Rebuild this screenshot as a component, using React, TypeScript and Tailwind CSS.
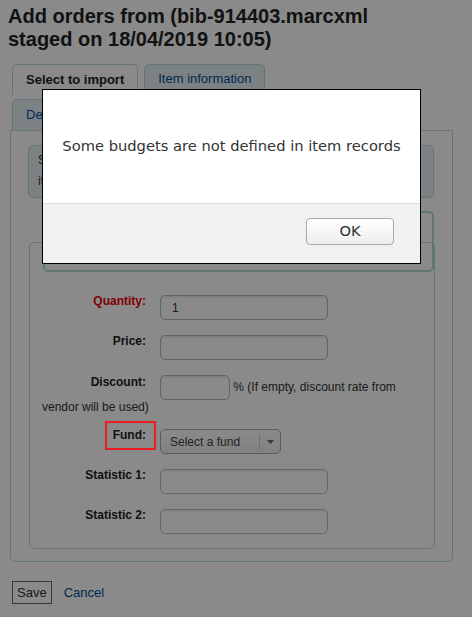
const inputCls =
  "h-[25px] rounded-[5px] border border-[#bcbcbc] bg-white shadow-[inset_0_1px_2px_rgba(0,0,0,0.12)]"

function Row({ label, children, required, mark }: { label: string; children?: React.ReactNode; required?: boolean; mark?: boolean }) {
  return (
    <li className="mb-[15px] flex items-start last:mb-0">
      <label
        className={`relative -mt-[1px] mr-[14px] w-[104px] shrink-0 text-right text-[12px] font-bold leading-[14px] ${
          required ? "text-[#e00]" : "text-[#222]"
        }`}
      >
        {label}
        {mark && (
          <span className="absolute right-[-10px] top-[-7px] z-50 h-[29px] w-[51px] border-2 border-[#ec1c24]" />
        )}
      </label>
      {children}
    </li>
  )
}

export default function App() {
  return (
    <div className="min-h-[617px] bg-white pl-[10px] pr-[19px] pt-[5px] font-['Liberation_Sans',Arial,sans-serif] text-[#333]">
      <h1 className="-ml-[2px] text-[20px] font-bold leading-[23px] text-[#222]">
        Add orders from (bib-914403.marcxml
        <br />
        staged on 18/04/2019 10:05)
      </h1>

      <div className="mt-[13px] flex flex-wrap gap-x-[6px] gap-y-[2px] pl-[2px] text-[13px]">
        <div className="h-[31px] rounded-t-[5px] border border-b-0 border-[#b9d8d9] bg-white px-[13px] font-bold leading-[29px] text-[#222]">
          Select to import
        </div>
        <div className="h-[29px] rounded-t-[5px] border border-[#b9d8d9] bg-[#e6f0f2] px-[13px] leading-[27px] text-[#004d99]">
          Item information
        </div>
        <div className="h-0 basis-full" />
        <div className="h-[31px] rounded-t-[5px] border border-b-0 border-[#b9d8d9] bg-[#e6f0f2] px-[13px] leading-[29px] text-[#004d99]">
          Default accounting details
        </div>
      </div>

      <div className="rounded-b-[5px] border border-[#b9d8d9] px-[17px] pb-[12px] pt-[14px]">
        <div className="mr-[1px] h-[53px] rounded-[5px] border border-[#b9d8d9] bg-[#e6f0f2] px-[9px] py-[4px] text-[12px] leading-[21px]">
          <p>Select the records you want to import and the items to order.</p>
          <p>items will be created with the values entered below.</p>
        </div>

        <div className="ml-[15px] mr-[1px] mt-[13px] h-[61px] rounded-[5px] border-2 border-[#b9d8d9] bg-white px-[10px] pt-[32px] text-[12px]">
          Biblio record: Reading psychology, by Gary Kilgour
        </div>

        <fieldset className="relative -mt-[30px] ml-[1px] rounded-[5px] border border-[#b9d8d9] px-[12px] pb-[14px] pt-[52px]">
          <ol className="list-none">
            <Row label="Quantity:" required>
              <input className={`${inputCls} w-[168px] px-[11px] text-[12px]`} defaultValue="1" />
            </Row>
            <Row label="Price:">
              <input className={`${inputCls} w-[168px]`} />
            </Row>
            <li className="mb-[14px] flow-root text-[12px] leading-[15px]">
              <label className="float-left mr-[14px] w-[104px] text-right font-bold text-[#222]">
                Discount:
              </label>
              <input className={`${inputCls} inline-block w-[70px] align-middle`} /> % (If empty, discount rate
              from vendor will be used)
            </li>
            <Row label="Fund:" mark>
              <div className="flex h-[25px] w-[121px] items-center rounded-[5px] border border-[#aaa] bg-gradient-to-b from-white to-[#eee] pl-[9px] text-[12px] text-[#444]">
                <span className="flex-1">Select a fund</span>
                <span className="h-[15px] w-px bg-[#ccc]" />
                <span className="flex w-[20px] justify-center">
                  <svg width="7" height="4" viewBox="0 0 7 4">
                    <path d="M0 0h7L3.5 4z" fill="#666" />
                  </svg>
                </span>
              </div>
            </Row>
            <Row label="Statistic 1:">
              <input className={`${inputCls} w-[168px]`} />
            </Row>
            <Row label="Statistic 2:">
              <input className={`${inputCls} w-[168px]`} />
            </Row>
          </ol>
        </fieldset>
      </div>

      <div className="ml-[2px] mt-[19px] flex items-center gap-[12px] text-[13px]">
        <button className="h-[23px] border border-[#666] bg-white px-[4px] leading-[21px] text-[#333]">Save</button>
        <a className="text-[#004d99]">Cancel</a>
      </div>

      <div className="fixed inset-0 z-40 bg-[rgba(0,0,0,0.46)]" />

      <div className="fixed left-[42px] top-[89px] z-50 flex h-[175px] w-[379px] flex-col border border-black bg-white font-['DejaVu_Sans',sans-serif] text-[#333]">
        <div className="flex h-[113px] items-center justify-center text-[14.7px]">
          Some budgets are not defined in item records
        </div>
        <div className="flex flex-1 justify-end border-t border-[#ddd] bg-[#f1f1f1] pr-[26px] pt-[14px]">
          <button className="h-[27px] w-[88px] rounded-[4px] border border-[#aaa] bg-gradient-to-b from-white to-[#ededed] text-[14.7px] text-[#333]">
            OK
          </button>
        </div>
      </div>
    </div>
  )
}
